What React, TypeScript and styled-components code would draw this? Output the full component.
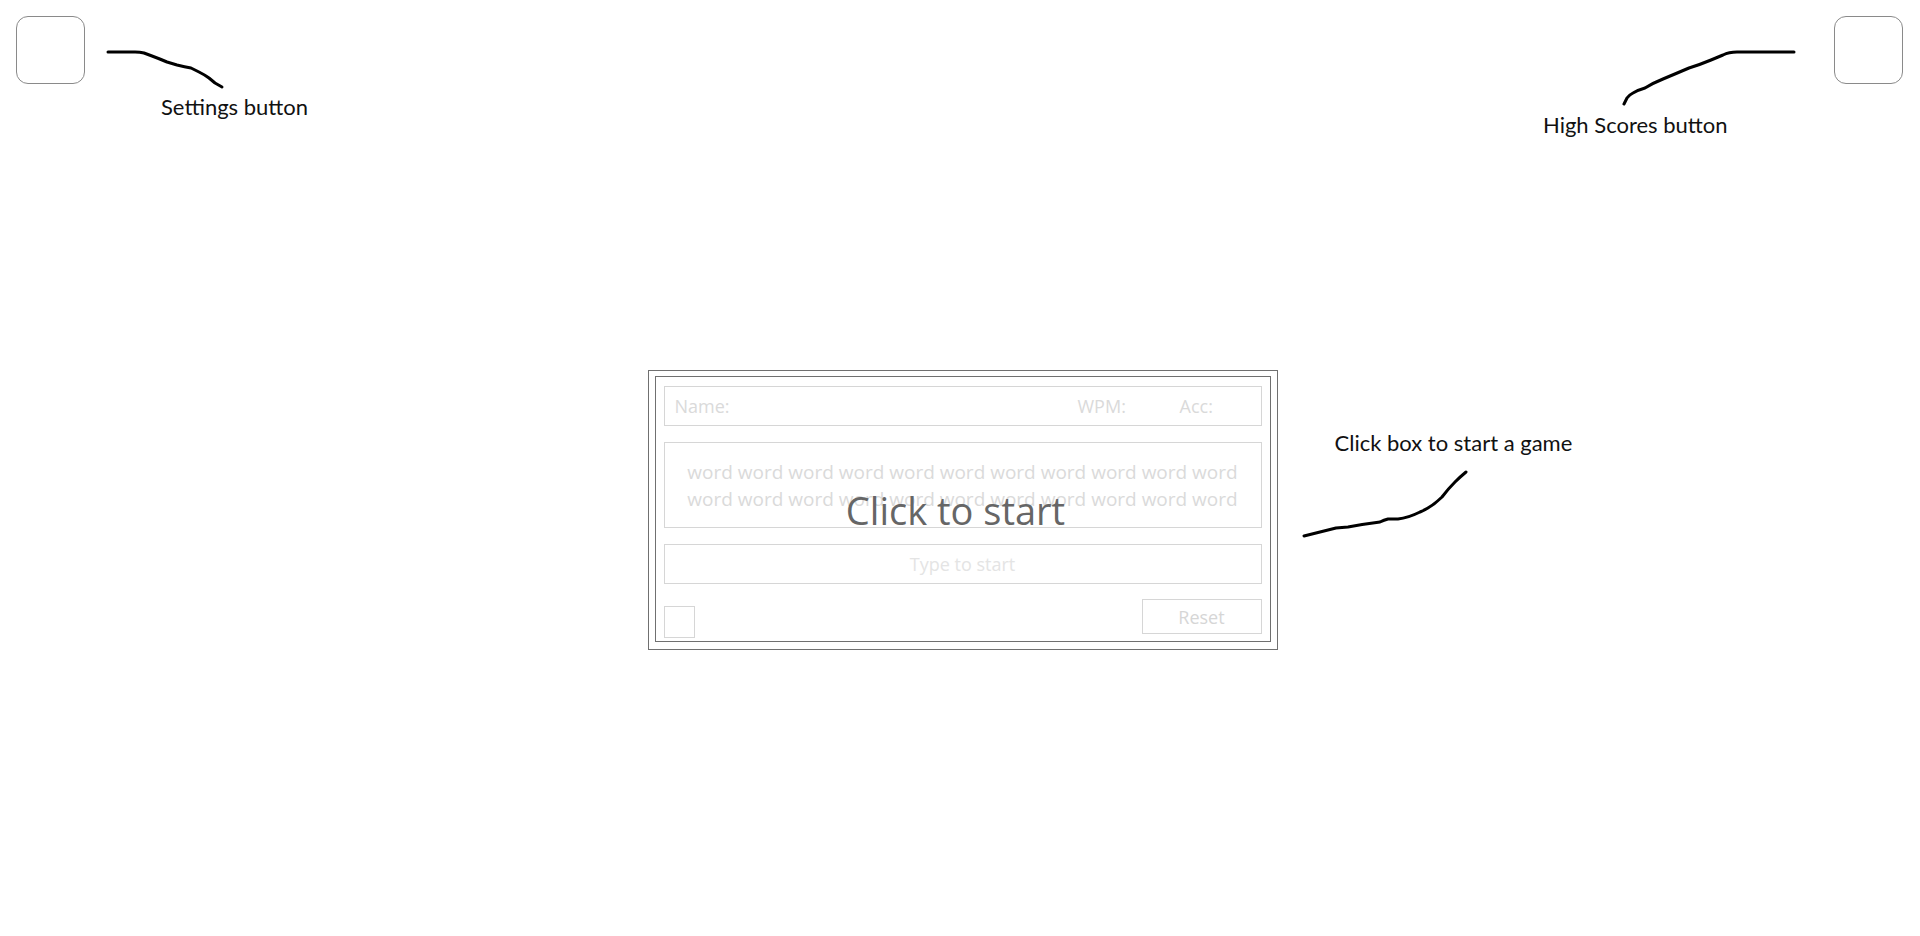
import React from 'react';
import styled, {createGlobalStyle} from 'styled-components';

const GlobalStyle = createGlobalStyle`
  html, body {
    margin: 0;
    padding: 0;
    background: #ffffff;
  }
  body {
    font-family: 'Open Sans', 'Noto Sans', sans-serif;
  }
`;

const faint = '#d6d6d6';
const frame = '#707070';

const Page = styled.div`
  width: 100%;
  height: 936px;
  display: flex;
  flex-direction: column;
  overflow: hidden;
`;

const Header = styled.div`
  height: 140px;
  box-sizing: border-box;
  padding: 16px 17px 0 16px;
  display: flex;
  justify-content: space-between;
  align-items: flex-start;
`;

const Group = styled.div`
  display: flex;
  align-items: flex-start;
`;

const IconButton = styled.button`
  width: 69px;
  height: 68px;
  border: 1px solid #8a8a8a;
  border-radius: 12px;
  background: #ffffff;
  padding: 0;
  cursor: pointer;
`;

const Callout = styled.div`
  display: flex;
  flex-direction: column;
  align-items: flex-start;
`;

const Scribble = styled.svg`
  display: block;
  overflow: visible;
`;

const Note = styled.div<{$indent?: number; $top?: number}>`
  font-family: Lato, 'Liberation Sans', sans-serif;
  font-size: 22px;
  line-height: 24px;
  color: #111111;
  white-space: nowrap;
  margin-left: ${({$indent}) => $indent || 0}px;
  margin-top: ${({$top}) => $top || 0}px;
`;

const Stage = styled.div`
  padding: 230px 0 0 5px;
  display: flex;
  justify-content: center;
`;

const CardWrap = styled.div`
  position: relative;
`;

const Card = styled.div`
  width: 630px;
  box-sizing: border-box;
  border: 1px solid ${frame};
  padding: 5px 6px 7px 6px;
  cursor: pointer;
`;

const Inner = styled.div`
  border: 1px solid ${frame};
  padding: 9px 8px 3px 8px;
  display: flex;
  flex-direction: column;
  gap: 16px;
`;

const Field = styled.div<{$height: number}>`
  height: ${({$height}) => $height}px;
  box-sizing: border-box;
  border: 1px solid ${faint};
  display: flex;
  align-items: center;
  color: #dadada;
  font-size: 18px;
`;

const StatsRow = styled(Field)`
  padding: 0 10px;
`;

const StatLabel = styled.span<{$width?: number}>`
  ${({$width}) => ($width ? `width: ${$width}px;` : 'flex: 1;')}
`;

const Words = styled(Field)`
  justify-content: center;
  text-align: center;
  font-size: 19px;
  line-height: 27px;
  padding: 2px 8px 0;
`;

const TypeHint = styled(Field)`
  justify-content: center;
  font-size: 18px;
  color: #e4e4e4;
`;

const Footer = styled.div`
  display: flex;
  justify-content: space-between;
  align-items: flex-end;
  height: 38px;
`;

const Check = styled.div`
  width: 31px;
  height: 32px;
  box-sizing: border-box;
  border: 1px solid ${faint};
`;

const ResetButton = styled.button`
  width: 120px;
  height: 35px;
  margin-bottom: 4px;
  border: 1px solid ${faint};
  background: #ffffff;
  color: #d6d6d6;
  font-family: 'Open Sans', 'Noto Sans', sans-serif;
  font-size: 18px;
  padding: 0;
`;

const StartOverlay = styled.div`
  position: absolute;
  inset: 0;
  display: flex;
  align-items: center;
  justify-content: center;
  padding-right: 14px;
  font-size: 38px;
  color: #666666;
  pointer-events: none;
`;

const SideNote = styled.div`
  position: absolute;
  left: calc(100% + 22px);
  top: 61px;
`;

const words = Array(22).fill('word').join(' ');

const stroke = {
  fill: 'none',
  stroke: '#000',
  strokeWidth: 3,
  strokeLinecap: 'round' as const,
  strokeLinejoin: 'round' as const,
};

export default function App() {
  return (
    <Page>
      <GlobalStyle />
      <Header>
        <Group>
          <IconButton aria-label="Settings" />
          <Callout>
            <Scribble width="120" height="40" viewBox="0 0 120 40" style={{marginLeft: 22, marginTop: 34}}>
              <path
                {...stroke}
                d="M1 2 L28 2 Q33 2 37 3 L45 6 Q53 9 60 12 L70 15 Q78 17 84 18 L92 22 Q98 25 102 28 L108 33 L115 37"
              />
            </Scribble>
            <Note $indent={76} $top={5}>Settings button</Note>
          </Callout>
        </Group>
        <Group>
          <Callout>
            <Scribble width="175" height="56" viewBox="0 0 175 56" style={{marginLeft: 80, marginTop: 34}}>
              <path
                {...stroke}
                d="M171 2 L114 2 Q106 2 100 5 L88 10 Q76 15 66 18 Q52 24 40 29 Q30 33 22 38 Q15 40 10 43 Q6 45 4 48 L1 54"
              />
            </Scribble>
            <Note $top={7}>High Scores button</Note>
          </Callout>
          <IconButton aria-label="High Scores" style={{marginLeft: 36}} />
        </Group>
      </Header>
      <Stage>
        <CardWrap>
          <Card>
            <Inner>
              <StatsRow $height={40}>
                <StatLabel>Name:</StatLabel>
                <StatLabel $width={102}>WPM:</StatLabel>
                <StatLabel $width={71}>Acc:</StatLabel>
              </StatsRow>
              <Words $height={86}>{words}</Words>
              <TypeHint $height={40}>Type to start</TypeHint>
              <Footer>
                <Check />
                <ResetButton>Reset</ResetButton>
              </Footer>
            </Inner>
          </Card>
          <StartOverlay>Click to start</StartOverlay>
          <SideNote>
            <Note $indent={35}>Click box to start a game</Note>
            <Scribble width="170" height="72" viewBox="0 0 170 72" style={{marginTop: 14}}>
              <path
                {...stroke}
                d="M166 3 Q160 8 155 13 Q148 20 142 28 Q132 38 120 43 Q108 49 98 50 L88 50 Q84 51 80 53 Q64 55 48 58 L36 59 Q20 63 4 67"
              />
            </Scribble>
          </SideNote>
        </CardWrap>
      </Stage>
    </Page>
  );
}
